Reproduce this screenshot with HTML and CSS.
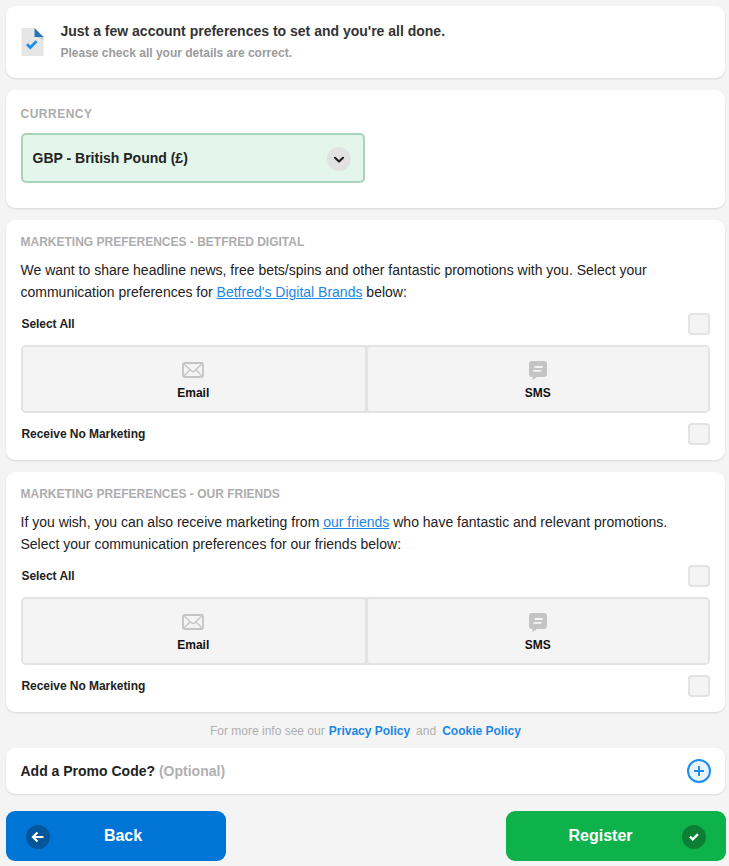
FILE: index.html
```html
<!DOCTYPE html>
<html lang="en">
<head>
<meta charset="utf-8">
<title>Account preferences</title>
<link rel="stylesheet" href="styles.css">
</head>
<body>
<svg class="defs" aria-hidden="true">
  <symbol id="mail" viewBox="0 0 22 16"><rect x="1" y="1" width="20" height="14" rx="1.5" fill="#f4f4f4" stroke="#c4c4c4" stroke-width="1.8"/><path d="M2 2l7.3 6.8q1.7 1.4 3.4 0L20 2M2 14l6-6M20 14l-6-6" fill="none" stroke="#c4c4c4" stroke-width="1.3"/></symbol>
  <symbol id="sms" viewBox="0 0 18 19"><path d="M3 0h12a3 3 0 0 1 3 3v10a3 3 0 0 1-3 3H8l-4.500 3v-3H3a3 3 0 0 1-3-3V3a3 3 0 0 1 3-3z" fill="#c4c4c4"/><path d="M5.500 6h8M4.500 9.800h8" stroke="#f4f4f4" stroke-width="1.800"/></symbol>
</svg>
<main class="page">
  <section class="card intro">
    <svg class="doc" viewBox="0 0 22 28"><path d="M0 0h13v8l9 5v15H0z" fill="#e6e6e6"/><path d="M14 8l8 5V8z" fill="#c9c9c9"/><path d="M13 0l9 9h-9z" fill="#2874b8"/><path d="M5.500 16.200l3.300 3.300 6.200-6.200" fill="none" stroke="#1b8df0" stroke-width="2.700"/></svg>
    <div>
      <h1 class="title">Just a few account preferences to set and you're all done.</h1>
      <p class="subtitle">Please check all your details are correct.</p>
    </div>
  </section>

  <section class="card currency">
    <h2 class="heading">CURRENCY</h2>
    <div class="select"><span>GBP - British Pound (£)</span>
      <svg class="chevron" viewBox="0 0 24 24"><circle cx="12" cy="12" r="12" fill="#e3e2e2"/><path d="M8 10.800l4 3.700 4-3.700" fill="none" stroke="#222" stroke-width="2.200" stroke-linecap="round" stroke-linejoin="round"/></svg>
    </div>
  </section>

  <section class="card marketing">
    <h2 class="heading">MARKETING PREFERENCES - BETFRED DIGITAL</h2>
    <p class="copy"><span class="line">We want to share headline news, free bets/spins and other fantastic promotions with you. Select your</span><span class="line">communication preferences for <a href="#">Betfred's Digital Brands</a> below:</span></p>
    <label class="row"><span>Select All</span><span class="box"></span></label>
    <div class="options">
      <div class="option"><svg class="mail"><use href="#mail"/></svg><span>Email</span></div>
      <div class="option"><svg class="sms"><use href="#sms"/></svg><span>SMS</span></div>
    </div>
    <label class="row"><span>Receive No Marketing</span><span class="box"></span></label>
  </section>

  <section class="card marketing">
    <h2 class="heading">MARKETING PREFERENCES - OUR FRIENDS</h2>
    <p class="copy"><span class="line">If you wish, you can also receive marketing from <a href="#">our friends</a> who have fantastic and relevant promotions.</span><span class="line">Select your communication preferences for our friends below:</span></p>
    <label class="row"><span>Select All</span><span class="box"></span></label>
    <div class="options">
      <div class="option"><svg class="mail"><use href="#mail"/></svg><span>Email</span></div>
      <div class="option"><svg class="sms"><use href="#sms"/></svg><span>SMS</span></div>
    </div>
    <label class="row"><span>Receive No Marketing</span><span class="box"></span></label>
  </section>

  <p class="info"><span>For more info see our</span> <a href="#">Privacy Policy</a> <span class="and">and</span> <a href="#">Cookie Policy</a></p>

  <section class="card promo">
    <span class="promo-label">Add a Promo Code? <span class="optional">(Optional)</span></span>
    <svg class="plus" viewBox="0 0 24 24"><circle cx="12" cy="12" r="11" fill="#e9f4fd" stroke="#1b8df0" stroke-width="2"/><path d="M12 7v10M7 12h10" stroke="#1b8df0" stroke-width="2"/></svg>
  </section>

  <nav class="actions">
    <a class="btn back" href="#"><svg class="round" viewBox="0 0 24 24"><circle cx="12" cy="12" r="12" fill="#05559a"/><path d="M17.500 12H7.500M11.500 7.500L7 12l4.500 4.500" fill="none" stroke="#fff" stroke-width="2.200"/></svg><span>Back</span></a>
    <a class="btn register" href="#"><span>Register</span><svg class="round" viewBox="0 0 24 24"><circle cx="12" cy="12" r="12" fill="#0b8034"/><path d="M8 11.700l2.800 2.700 5.200-5.200" fill="none" stroke="#fff" stroke-width="2.400"/></svg></a>
  </nav>
</main>
</body>
</html>
```
FILE: styles.css
```css
* { box-sizing: border-box; }
body { margin: 0; background: #f4f4f4; font-family: "Liberation Sans", Arial, sans-serif; color: #222; height: 866px; overflow: hidden; }
h1, h2, p { margin: 0; }
a { color: #1b87e6; }
.defs { display: none; }
.page { display: flex; flex-direction: column; padding: 6px 3px 0 6px; }
.card { background: #fff; border-radius: 9px; box-shadow: 0 1px 2px rgba(0, 0, 0, .12); padding: 0 15px 0 14.5px; margin: 0 1px 12px 0; }
.title, .subtitle, .heading, .line, .row, .info, .promo-label { white-space: nowrap; }

.intro { display: flex; height: 72px; gap: 17px; }
.doc { width: 23px; height: 28px; margin-top: 22px; }
.title { font-size: 14px; line-height: 18px; margin-top: 16px; color: #333; }
.subtitle { font-size: 12px; line-height: 16px; margin-top: 5px; font-weight: bold; color: #9b9b9b; }

.heading { font-size: 12px; line-height: 16px; font-weight: bold; color: #adadad; padding-top: 14px; }
.currency { height: 118px; }
.currency .heading { padding-top: 16px; letter-spacing: .5px; }
.select { display: flex; align-items: center; justify-content: space-between; width: 344px; height: 50px; margin: 11px 0 0 .5px; padding: 0 12px 0 9.5px; border: 2px solid #a8d5ba; border-radius: 5px; background: #e4f6ec; font-size: 14px; font-weight: bold; }
.chevron { width: 24px; height: 24px; margin-top: 2px; }

.marketing { height: 240px; }
.copy { font-size: 14px; line-height: 22px; margin-top: 9px; }
.line { display: block; }
.row { display: flex; justify-content: space-between; align-items: center; height: 22px; font-size: 12px; font-weight: bold; letter-spacing: -.05px; padding-left: 1px; }
.copy + .row { margin-top: 10px; }
.box { width: 22px; height: 22px; border: 2px solid #e3e3e3; border-radius: 4px; background: #f4f4f4; }
.options { display: flex; gap: 3px; height: 68px; margin: 10px 0 10px .5px; border: 2px solid #e3e3e3; border-radius: 5px; background: #e3e3e3; }
.option { flex: 1; display: flex; flex-direction: column; align-items: center; background: #f4f4f4; font-size: 12px; line-height: 14px; font-weight: bold; color: #111; padding-top: 14px; border-radius: 2px; }
.option:first-child { padding-right: 1px; }
.mail { width: 22px; height: 16px; margin: 1px 0 8px; }
.sms { width: 18px; height: 19px; margin: 0 0 6px; }

.info { display: flex; align-items: center; height: 14px; margin: 0 0 10px 204px; font-size: 12px; color: #b0b0b0; }
.info a { font-weight: bold; text-decoration: none; margin: 0 0 0 4px; }
.info .and { margin: 0 2px 0 6px; }
.promo { display: flex; align-items: center; justify-content: space-between; height: 46px; margin-bottom: 17px; padding-right: 14px; font-size: 14px; font-weight: bold; }
.optional { color: #b0b0b0; }
.plus { width: 24px; height: 24px; }

.actions { display: flex; justify-content: space-between; }
.btn { display: flex; align-items: center; width: 220px; height: 50px; border-radius: 9px; padding: 0 20px; color: #fff; font-size: 16px; font-weight: bold; text-decoration: none; }
.btn span { flex: 1; text-align: center; }
.back { background: #0075d5; padding-right: 30px; }
.register { background: #0eb24a; padding-left: 13px; }
.round { width: 24px; height: 24px; margin-top: 2px; }
```
